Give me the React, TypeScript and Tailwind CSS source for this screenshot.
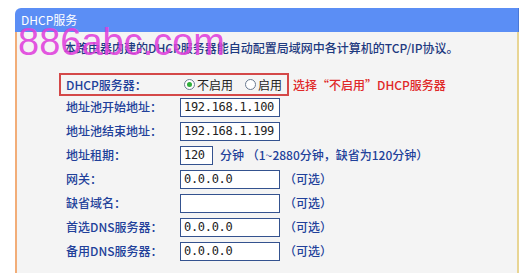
import React from 'react';

const rows = [
  { label: '地址池开始地址：', value: '192.168.1.100' },
  { label: '地址池结束地址：', value: '192.168.1.199' },
];

const optionalRows = [
  { label: '网关：', value: '0.0.0.0' },
  { label: '缺省域名：', value: '' },
  { label: '首选DNS服务器：', value: '0.0.0.0' },
  { label: '备用DNS服务器：', value: '0.0.0.0' },
];

const Radio = ({ checked }: { checked?: boolean }) => (
  <span className="w-[11px] h-[11px] rounded-full border border-[#6a7a90] bg-white flex items-center justify-center">
    {checked && <span className="w-[5px] h-[5px] rounded-full bg-[#2fae3a]" />}
  </span>
);

const Input = ({ value, w = 'w-[100px]' }: { value: string; w?: string }) => (
  <div className={`${w} h-[19px] bg-white border border-[#34528f] pl-[3px] flex items-center text-[12px] text-[#222] font-['DejaVu_Sans_Mono',monospace] tracking-[-0.3px]`}>
    {value}
  </div>
);

const App: React.FC = () => (
  <div className="w-[526px] h-[273px] overflow-hidden bg-white relative pl-[15px] pt-[8px] font-['Noto_Sans_CJK_SC',sans-serif] text-[12px] leading-[14px]">
    <div className="w-[504px]">
      <div className="h-[24px] bg-[#5b8ef5] rounded-tl-[6px] pl-[6px] flex items-center text-white border-r border-[#4a78d8]">
        DHCP服务
      </div>
      <div className="h-[260px] bg-[#f4f4f4] border-l-2 border-l-[#f2ad78] border-r-2 border-r-[#e8d594] pt-[9px]">
        <p className="pl-[47px] text-[#1e3a80] font-medium">
          本路由器内建的DHCP服务器能自动配置局域网中各计算机的TCP/IP协议。
        </p>

        <div className="mt-[18px] flex items-center">
          <div className="ml-[42px] w-[230px] h-[23px] border-2 border-[#d44848] pl-[5px] flex items-center">
            <span className="w-[114px] text-[#21409a] font-medium">DHCP服务器：</span>
            <span className="ml-[4px] flex items-center gap-[2px] text-[#222]">
              <Radio checked />
              不启用
            </span>
            <span className="ml-[12px] flex items-center gap-[2px] text-[#222]">
              <Radio />
              启用
            </span>
          </div>
          <span className="ml-[4px] text-[#e02828] font-medium">选择“不启用”DHCP服务器</span>
        </div>

        <div className="mt-[-1px]">
          {rows.map((r) => (
            <div key={r.label} className="h-[24px] pl-[49px] flex items-center">
              <span className="w-[114px] text-[#21409a] font-medium">{r.label}</span>
              <Input value={r.value} />
            </div>
          ))}
          <div className="h-[24px] pl-[49px] flex items-center">
            <span className="w-[114px] text-[#21409a] font-medium">地址租期：</span>
            <Input value="120" w="w-[33px]" />
            <span className="ml-[7px] text-[#21409a] font-medium">分钟 （1~2880分钟，缺省为120分钟）</span>
          </div>
          {optionalRows.map((r) => (
            <div key={r.label} className="h-[24px] pl-[49px] flex items-center">
              <span className="w-[114px] text-[#21409a] font-medium">{r.label}</span>
              <Input value={r.value} />
              <span className="ml-[4px] text-[#21409a] font-medium">（可选）</span>
            </div>
          ))}
        </div>
      </div>
    </div>

    <div className="absolute left-[18px] top-[23px] text-[38px] leading-[38px] text-[#e040dc]/90 font-['Liberation_Sans',sans-serif] pointer-events-none">
      886abc.com
    </div>
  </div>
);

export default App;
